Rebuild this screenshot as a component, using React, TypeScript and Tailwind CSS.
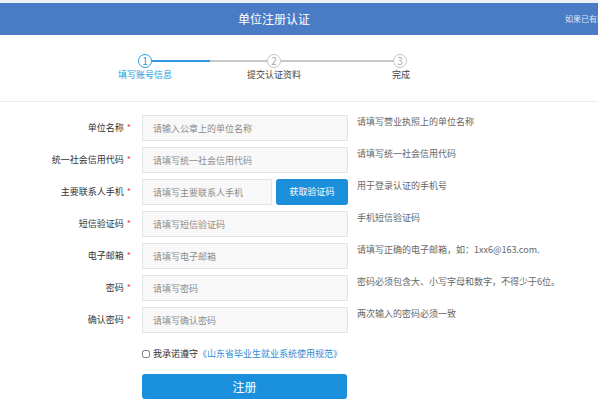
import { useState } from 'react'

const fields = [
  { label: '单位名称', placeholder: '请输入公章上的单位名称', hint: '请填写营业执照上的单位名称' },
  { label: '统一社会信用代码', placeholder: '请填写统一社会信用代码', hint: '请填写统一社会信用代码' },
  { label: '主要联系人手机', placeholder: '请填写主要联系人手机', hint: '用于登录认证的手机号', code: true },
  { label: '短信验证码', placeholder: '请填写短信验证码', hint: '手机短信验证码' },
  { label: '电子邮箱', placeholder: '请填写电子邮箱', hint: '请填写正确的电子邮箱，如：1xx6@163.com.' },
  { label: '密码', placeholder: '请填写密码', hint: '密码必须包含大、小写字母和数字，不得少于6位。', type: 'password' },
  { label: '确认密码', placeholder: '请填写确认密码', hint: '两次输入的密码必须一致', type: 'password' },
]

function Circle({ n, active }: { n: number; active?: boolean }) {
  return (
    <div
      className={`w-[14px] h-[14px] shrink-0 rounded-full border-[1.5px] flex items-center justify-center text-[10px] leading-none bg-white ${
        active ? 'border-[#2a9be2] text-[#2a9be2]' : 'border-[#c4c4c4] text-[#aaa]'
      }`}
    >
      {n}
    </div>
  )
}

export default function App() {
  const [agree, setAgree] = useState(false)

  return (
    <div
      className="w-[598px] h-[407px] overflow-hidden bg-white text-[#333]"
      style={{ fontFamily: '"Noto Sans CJK SC", "Liberation Sans", sans-serif' }}
    >
      <div className="h-[3px] bg-[#eef1f6]"></div>
      <div className="h-[32px] bg-[#4a7cc5] flex items-center overflow-hidden">
        <div className="w-[548px] shrink-0 text-center text-white text-[12px]">单位注册认证</div>
        <div className="ml-[17px] shrink-0 whitespace-nowrap text-[8px] text-[#dfe7f4]">如果已有账号，请登录</div>
      </div>

      {/* steps */}
      <div className="pt-[19px] h-[66px]">
        <div className="flex items-center ml-[138px]">
          <Circle n={1} active />
          <div className="w-[58px] h-[2px] bg-[#2a9be2]"></div>
          <div className="w-[57px] h-[2px] bg-[#c8c8c8]"></div>
          <Circle n={2} />
          <div className="w-[112px] h-[2px] bg-[#c8c8c8]"></div>
          <Circle n={3} />
        </div>
        <div className="flex mt-[1px] text-[9px] leading-[12px]">
          <div className="ml-[105px] w-[80px] text-center text-[#2a9be2]">填写账号信息</div>
          <div className="ml-[49px] w-[80px] text-center text-[#444]">提交认证资料</div>
          <div className="ml-[47px] w-[80px] text-center text-[#444]">完成</div>
        </div>
      </div>
      <div className="h-px bg-[#ececec]"></div>

      {/* form */}
      <div className="pt-[13px] flex flex-col gap-[6px]">
        {fields.map((f) => (
          <div key={f.label} className="flex items-start h-[26px]">
            <div className="w-[131px] h-[26px] flex items-center justify-end text-[9px] text-[#333] whitespace-nowrap">
              {f.label}
              <span className="text-[#e5403a] ml-[3px]">*</span>
            </div>
            <div className="ml-[11px] w-[206px] flex gap-[4px]">
              <input
                type={f.type || 'text'}
                placeholder={f.placeholder}
                className={`${f.code ? 'w-[130px]' : 'w-[206px]'} h-[26px] bg-[#f8f8f8] border border-[#e4e4e4] px-[10px] text-[9px] outline-none placeholder:text-[#8c8c8c]`}
              />
              {f.code && (
                <button className="w-[72px] h-[26px] rounded-[3px] bg-[#1b8fdc] text-white text-[9px]">
                  获取验证码
                </button>
              )}
            </div>
            <div className="ml-[9px] pt-[1px] text-[9px] leading-[12px] text-[#666] whitespace-nowrap">{f.hint}</div>
          </div>
        ))}

        <div className="flex items-center ml-[142px] mt-[8px] h-[14px] text-[9px]">
          <input
            type="checkbox"
            checked={agree}
            onChange={(e) => setAgree(e.target.checked)}
            className="w-[8px] h-[8px] m-0"
          />
          <span className="ml-[3px] text-[#333]">我承诺遵守</span>
          <a href="#" className="text-[#2a8bd6]">《山东省毕业生就业系统使用规范》</a>
        </div>

        <button className="ml-[142px] mt-[7px] w-[205px] h-[25px] rounded-[3px] bg-[#1a90dc] text-white text-[12px]">
          注册
        </button>
      </div>
    </div>
  )
}
